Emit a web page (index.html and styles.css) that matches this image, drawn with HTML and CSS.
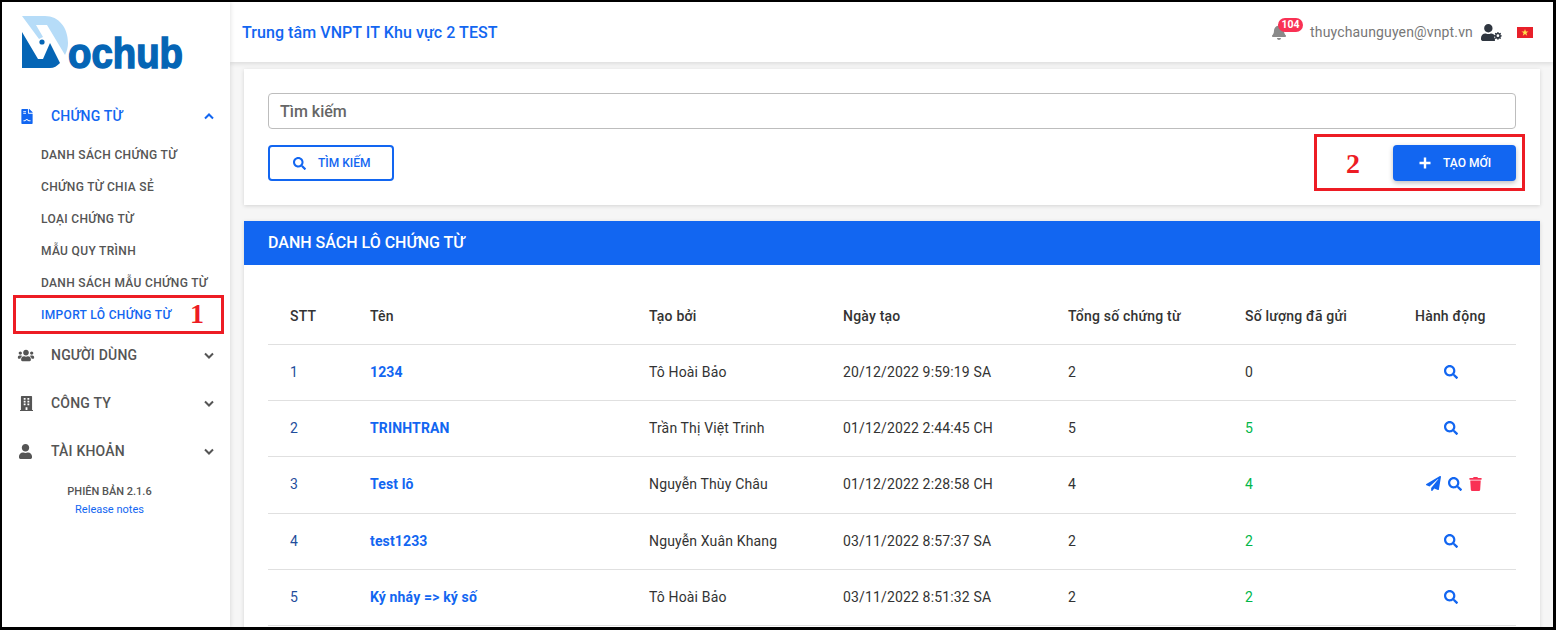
FILE: index.html

```html
<!DOCTYPE html>
<html lang="vi">
<head>
  <meta charset="UTF-8">
  <title>Dochub</title>
  <link rel="stylesheet" href="styles.css">
</head>
<body>
  <div class="frame">
    <aside class="sidebar">
      <div class="logo">
        <svg width="190" height="64" viewBox="0 0 190 64">
          <path d="M1 1H24C38 1 47 13 47 28C47 32 46 36 44 40L26 10H15L22 22L18 24Z" fill="#b6dcf8"/>
          <path d="M1 17L17 44H22L29 28L39 48C36 51 33 53 29 53H1Z" fill="#0565b5"/>
          <circle cx="21" cy="27" r="2.600" fill="#0565b5"/>
          <text x="47" y="53" class="logo-text" textLength="115" lengthAdjust="spacingAndGlyphs">ochub</text>
        </svg>
      </div>

      <div class="menu-head active">
        <svg class="menu-icon icon-doc" width="12" height="15" viewBox="0 0 384 512"><path fill="currentColor" d="M224 136V0H24C10.700 0 0 10.700 0 24v464c0 13.300 10.700 24 24 24h336c13.300 0 24-10.700 24-24V160H248c-13.200 0-24-10.800-24-24zM64 72c0-4.400 3.600-8 8-8h80c4.400 0 8 3.600 8 8v16c0 4.400-3.600 8-8 8H72c-4.400 0-8-3.600-8-8V72zm0 64c0-4.400 3.600-8 8-8h80c4.400 0 8 3.600 8 8v16c0 4.400-3.600 8-8 8H72c-4.400 0-8-3.600-8-8v-16zm192 280c-30 0-46-12-58-28-8-10-20-12-30 0-14 18-30 28-56 28H72v-32h40c18 0 26-10 36-22 22-26 56-24 76 0 10 14 18 22 32 22h56v32zM384 121.900v6.100H256V0h6.100c6.400 0 12.500 2.500 17 7l97.900 98c4.500 4.500 7 10.600 7 16.900z"/></svg>
        <span class="menu-label">CHỨNG TỪ</span>
        <svg class="chev" width="10" height="7" viewBox="0 0 10 7"><path d="M1 5.500L5 1.500L9 5.500" fill="none" stroke="currentColor" stroke-width="2"/></svg>
      </div>
      <ul class="submenu">
        <li>DANH SÁCH CHỨNG TỪ</li>
        <li>CHỨNG TỪ CHIA SẺ</li>
        <li>LOẠI CHỨNG TỪ</li>
        <li>MẪU QUY TRÌNH</li>
        <li>DANH SÁCH MẪU CHỨNG TỪ</li>
        <li class="current">IMPORT LÔ CHỨNG TỪ</li>
      </ul>

      <div class="menu-head">
        <svg class="menu-icon" width="18" height="13" viewBox="0 0 640 512"><path fill="currentColor" d="M96 224c35.300 0 64-28.700 64-64s-28.700-64-64-64-64 28.700-64 64 28.700 64 64 64zm448 0c35.300 0 64-28.700 64-64s-28.700-64-64-64-64 28.700-64 64 28.700 64 64 64zm32 32h-64c-17.600 0-33.500 7.100-45.100 18.600 40.300 22.100 68.900 62 75.100 109.400h66c17.700 0 32-14.300 32-32v-32c0-35.300-28.700-64-64-64zm-256 0c61.900 0 112-50.100 112-112S381.900 32 320 32 208 82.100 208 144s50.100 112 112 112zm76.800 32h-8.300c-20.800 10-43.900 16-68.500 16s-47.600-6-68.500-16h-8.300C179.600 288 128 339.600 128 403.200V432c0 26.500 21.500 48 48 48h288c26.500 0 48-21.500 48-48v-28.800c0-63.600-51.600-115.200-115.200-115.200zm-223.700-13.400C161.500 263.100 145.600 256 128 256H64c-35.300 0-64 28.700-64 64v32c0 17.700 14.300 32 32 32h65.900c6.300-47.400 34.900-87.300 75.200-109.400z"/></svg>
        <span class="menu-label">NGƯỜI DÙNG</span>
        <svg class="chev" width="10" height="7" viewBox="0 0 10 7"><path d="M1 1.500L5 5.500L9 1.500" fill="none" stroke="currentColor" stroke-width="2"/></svg>
      </div>
      <div class="menu-head">
        <svg class="menu-icon icon-building" width="13" height="15" viewBox="0 0 448 512"><path fill="currentColor" d="M436 480h-20V24c0-13.300-10.700-24-24-24H56C42.700 0 32 10.700 32 24v456H12c-6.600 0-12 5.400-12 12v20h448v-20c0-6.600-5.400-12-12-12zM128 76c0-6.600 5.400-12 12-12h40c6.600 0 12 5.400 12 12v40c0 6.600-5.400 12-12 12h-40c-6.600 0-12-5.400-12-12V76zm0 96c0-6.600 5.400-12 12-12h40c6.600 0 12 5.400 12 12v40c0 6.600-5.400 12-12 12h-40c-6.600 0-12-5.400-12-12v-40zm52 148h-40c-6.600 0-12-5.400-12-12v-40c0-6.600 5.400-12 12-12h40c6.600 0 12 5.400 12 12v40c0 6.600-5.400 12-12 12zm76 160h-64v-84c0-6.600 5.400-12 12-12h40c6.600 0 12 5.400 12 12v84zm64-172c0 6.600-5.400 12-12 12h-40c-6.600 0-12-5.400-12-12v-40c0-6.600 5.400-12 12-12h40c6.600 0 12 5.400 12 12v40zm0-96c0 6.600-5.400 12-12 12h-40c-6.600 0-12-5.400-12-12v-40c0-6.600 5.400-12 12-12h40c6.600 0 12 5.400 12 12v40zm0-96c0 6.600-5.400 12-12 12h-40c-6.600 0-12-5.400-12-12V76c0-6.600 5.400-12 12-12h40c6.600 0 12 5.400 12 12v40z"/></svg>
        <span class="menu-label">CÔNG TY</span>
        <svg class="chev" width="10" height="7" viewBox="0 0 10 7"><path d="M1 1.500L5 5.500L9 1.500" fill="none" stroke="currentColor" stroke-width="2"/></svg>
      </div>
      <div class="menu-head">
        <svg class="menu-icon icon-person" width="13" height="15" viewBox="0 0 448 512"><path fill="currentColor" d="M224 256c70.700 0 128-57.300 128-128S294.700 0 224 0 96 57.300 96 128s57.300 128 128 128zm89.600 32h-16.700c-22.200 10.200-46.900 16-72.900 16s-50.600-5.800-72.900-16h-16.700C60.200 288 0 348.200 0 422.400V464c0 26.500 21.500 48 48 48h352c26.500 0 48-21.500 48-48v-41.600c0-74.200-60.200-134.400-134.400-134.400z"/></svg>
        <span class="menu-label">TÀI KHOẢN</span>
        <svg class="chev" width="10" height="7" viewBox="0 0 10 7"><path d="M1 1.500L5 5.500L9 1.500" fill="none" stroke="currentColor" stroke-width="2"/></svg>
      </div>

      <div class="version">
        <div class="version-no">PHIÊN BẢN 2.1.6</div>
        <div class="release">Release notes</div>
      </div>

      <div class="mark mark-one"><span class="mark-no">1</span></div>
    </aside>

    <div class="main">
      <header class="topbar">
        <div class="org">Trung tâm VNPT IT Khu vực 2 TEST</div>
        <div class="user">
          <span class="bell">
            <svg width="14" height="16" viewBox="0 0 448 512"><path fill="#8a8a8a" d="M224 512c35.320 0 63.970-28.650 63.970-64H160.030c0 35.350 28.650 64 63.970 64zm215.390-149.710c-19.320-20.760-55.470-51.990-55.470-154.290 0-77.700-54.480-139.900-127.940-155.160V32c0-17.670-14.320-32-31.980-32s-31.980 14.330-31.980 32v20.840C118.560 68.100 64.080 130.300 64.080 208c0 102.300-36.150 133.530-55.470 154.290-6 6.450-8.660 14.160-8.610 21.710.11 16.400 12.980 32 32.100 32h383.800c19.120 0 32-15.600 32.100-32 .05-7.550-2.610-15.270-8.610-21.710z"/></svg>
            <span class="badge">104</span>
          </span>
          <span class="email">thuychaunguyen@vnpt.vn</span>
          <svg class="user-cog" width="21" height="17" viewBox="0 0 640 512"><path fill="#2f3640" d="M224 256c70.700 0 128-57.300 128-128S294.700 0 224 0 96 57.300 96 128s57.300 128 128 128zm89.600 32h-16.700c-22.200 10.200-46.900 16-72.900 16s-50.600-5.800-72.900-16h-16.700C60.200 288 0 348.200 0 422.400V464c0 26.500 21.500 48 48 48h352c10 0 19-3 27-8-4-14-8-40 1-60-24-14-32-46-18-70 4-8 10-16 18-24-30-28-68-62-114-62z"/><path fill="#2f3640" d="M530 240l-28 0-10 34-20 8-30-16-20 20 16 30-8 20-34 10v28l34 10 8 20-16 30 20 20 30-16 20 8 10 34h28l10-34 20-8 30 16 20-20-16-30 8-20 34-10v-28l-34-10-8-20 16-30-20-20-30 16-20-8zM516 312a42 42 0 1 1 0 84 42 42 0 1 1 0-84z"/></svg>
          <svg class="flag" width="16" height="11" viewBox="0 0 16 11"><rect width="16" height="11" fill="#e8202a"/><path fill="#ffe14d" d="M8 2l.9 2.500h2.600l-2.100 1.600.8 2.600L8 7.100 5.800 8.700l.8-2.600-2.100-1.600h2.600z"/></svg>
        </div>
      </header>

      <div class="content">
        <section class="card search-card">
          <div class="search-input">Tìm kiếm</div>
          <div class="search-actions">
            <button class="btn btn-outline">
              <svg width="13" height="13" viewBox="0 0 512 512"><path fill="currentColor" d="M505 442.700L405.300 343c-4.500-4.500-10.600-7-17-7H372c27.600-35.300 44-79.700 44-128C416 93.100 322.900 0 208 0S0 93.100 0 208s93.100 208 208 208c48.300 0 92.700-16.400 128-44v16.300c0 6.400 2.500 12.500 7 17l99.700 99.700c9.400 9.400 24.600 9.400 33.900 0l28.300-28.300c9.400-9.400 9.400-24.600.1-34zM208 336c-70.700 0-128-57.200-128-128 0-70.700 57.200-128 128-128 70.700 0 128 57.200 128 128 0 70.700-57.200 128-128 128z"/></svg>
              TÌM KIẾM
            </button>
            <button class="btn btn-solid">
              <svg width="12" height="12" viewBox="0 0 12 12"><path d="M6 .5v11M.5 6h11" stroke="currentColor" stroke-width="2.400" fill="none"/></svg>
              TẠO MỚI
            </button>
          </div>
          <div class="mark mark-two"><span class="mark-no">2</span></div>
        </section>

        <section class="card list-card">
          <h2 class="list-title">DANH SÁCH LÔ CHỨNG TỪ</h2>
          <div class="table-wrap">
            <table>
              <colgroup>
                <col class="c-stt"><col class="c-name"><col class="c-by"><col class="c-date"><col class="c-total"><col class="c-sent"><col class="c-act">
              </colgroup>
              <thead>
                <tr><th>STT</th><th>Tên</th><th>Tạo bởi</th><th>Ngày tạo</th><th>Tổng số chứng từ</th><th>Số lượng đã gửi</th><th>Hành động</th></tr>
              </thead>
              <tbody>
                <tr>
                  <td class="num">1</td><td class="name">1234</td><td>Tô Hoài Bảo</td><td>20/12/2022 9:59:19 SA</td><td>2</td><td>0</td>
                  <td class="act"><svg class="ic-blue" width="14" height="14" viewBox="0 0 512 512"><use href="#ic-search"/></svg></td>
                </tr>
                <tr>
                  <td class="num">2</td><td class="name">TRINHTRAN</td><td>Trần Thị Việt Trinh</td><td>01/12/2022 2:44:45 CH</td><td>5</td><td class="sent">5</td>
                  <td class="act"><svg class="ic-blue" width="14" height="14" viewBox="0 0 512 512"><use href="#ic-search"/></svg></td>
                </tr>
                <tr class="tall">
                  <td class="num">3</td><td class="name">Test lô</td><td>Nguyễn Thùy Châu</td><td>01/12/2022 2:28:58 CH</td><td>4</td><td class="sent">4</td>
                  <td class="act act-multi">
                    <svg class="ic-blue" width="15" height="15" viewBox="0 0 512 512"><path fill="currentColor" d="M476 3.200L12.500 270.600c-18.100 10.400-15.800 35.600 2.200 43.200L121 358.400l287.300-253.200c5.500-4.900 13.300 2.600 8.600 8.300L176 407v80.500c0 23.600 28.500 32.900 42.500 15.800L282 426l124.600 52.200c14.200 6 30.400-2.900 33-18.200l72-432C515 7.800 493.300-6.800 476 3.200z"/></svg>
                    <svg class="ic-blue" width="14" height="14" viewBox="0 0 512 512"><use href="#ic-search"/></svg>
                    <svg class="ic-red" width="13" height="14" viewBox="0 0 448 512"><path fill="currentColor" d="M432 32H312l-9.400-18.700A24 24 0 0 0 281.100 0H166.800a23.700 23.700 0 0 0-21.400 13.300L136 32H16A16 16 0 0 0 0 48v32a16 16 0 0 0 16 16h416a16 16 0 0 0 16-16V48a16 16 0 0 0-16-16zM53.200 467a48 48 0 0 0 47.900 45h245.800a48 48 0 0 0 47.900-45L416 128H32z"/></svg>
                  </td>
                </tr>
                <tr>
                  <td class="num">4</td><td class="name">test1233</td><td>Nguyễn Xuân Khang</td><td>03/11/2022 8:57:37 SA</td><td>2</td><td class="sent">2</td>
                  <td class="act"><svg class="ic-blue" width="14" height="14" viewBox="0 0 512 512"><use href="#ic-search"/></svg></td>
                </tr>
                <tr>
                  <td class="num">5</td><td class="name">Ký nháy =&gt; ký số</td><td>Tô Hoài Bảo</td><td>03/11/2022 8:51:32 SA</td><td>2</td><td class="sent">2</td>
                  <td class="act"><svg class="ic-blue" width="14" height="14" viewBox="0 0 512 512"><use href="#ic-search"/></svg></td>
                </tr>
              </tbody>
            </table>
          </div>
        </section>
      </div>
    </div>
  </div>

  <svg class="defs" width="0" height="0">
    <defs>
      <path id="ic-search" fill="currentColor" d="M505 442.700L405.300 343c-4.500-4.500-10.600-7-17-7H372c27.600-35.300 44-79.700 44-128C416 93.100 322.900 0 208 0S0 93.100 0 208s93.100 208 208 208c48.300 0 92.700-16.400 128-44v16.300c0 6.400 2.500 12.500 7 17l99.700 99.700c9.400 9.400 24.600 9.400 33.900 0l28.300-28.300c9.400-9.400 9.400-24.600.1-34zM208 336c-70.700 0-128-57.200-128-128 0-70.700 57.200-128 128-128 70.700 0 128 57.200 128 128 0 70.700-57.200 128-128 128z"/>
    </defs>
  </svg>
</body>
</html>
```

FILE: styles.css

```css
* {
  box-sizing: border-box;
}

html,
body {
  margin: 0;
  height: 630px;
  overflow: hidden;
}

body {
  font-family: Roboto, sans-serif;
  color: #333;
  background: #000;
}

.defs {
  position: absolute;
}

.frame {
  display: flex;
  height: 630px;
  border: 2px solid #000;
  border-bottom-width: 3px;
  border-right-width: 3px;
  background: #f6f6f6;
  overflow: hidden;
}

/* sidebar */
.sidebar {
  position: relative;
  width: 228px;
  flex: none;
  background: #fff;
  box-shadow: 1px 0 4px rgba(0, 0, 0, 0.1);
  z-index: 2;
}

.logo {
  height: 90px;
  padding: 13px 0 0 19px;
}

.logo svg {
  display: block;
}

.logo-text {
  font-family: "Liberation Sans", sans-serif;
  font-weight: 700;
  font-size: 43px;
  fill: #0565b5;
  stroke: #0565b5;
  stroke-width: 1.5px;
}

.menu-head {
  display: flex;
  align-items: center;
  height: 48px;
  padding-left: 15px;
  padding-right: 16px;
  font-size: 14px;
  font-weight: 500;
  color: #555;
  letter-spacing: 0.2px;
}

.menu-head.active {
  color: #1266f1;
}

.menu-icon {
  flex: none;
}

.icon-doc {
  margin-left: 4px;
}

.icon-building {
  margin-left: 3px;
}

.icon-person {
  margin-left: 2px;
}

.menu-label {
  position: absolute;
  left: 49px;
}

.chev {
  margin-left: auto;
  color: #555;
}

.active .chev {
  color: #1266f1;
}

.submenu {
  list-style: none;
  margin: -1px 0 0;
  padding: 0 0 0 39px;
  font-size: 12px;
  font-weight: 500;
  color: #555;
}

.submenu li {
  height: 32px;
  line-height: 32px;
  letter-spacing: 0.33px;
}

.submenu .current {
  color: #1266f1;
}

.version {
  margin-top: 8px;
  text-align: center;
  font-size: 11px;
  padding-right: 13px;
}

.version-no {
  font-weight: 500;
  color: #555;
  line-height: 18px;
}

.release {
  color: #1266f1;
  line-height: 18px;
}

/* red notes drawn on the screenshot */
.mark {
  position: absolute;
  border: 3px solid #ed1c24;
}

.mark-no {
  position: absolute;
  font-family: "Liberation Serif", serif;
  font-weight: 700;
  font-size: 28px;
  line-height: 28px;
  color: #ed1c24;
}

.mark-one {
  left: 11px;
  top: 293px;
  width: 211px;
  height: 39px;
}

.mark-one .mark-no {
  left: 174px;
  top: 2px;
}

.mark-two {
  left: 1070px;
  top: 65px;
  width: 211px;
  height: 57px;
}

.mark-two .mark-no {
  left: 29px;
  top: 13px;
}

/* top bar */
.main {
  flex: 1;
  min-width: 0;
  display: flex;
  flex-direction: column;
}

.topbar {
  flex: none;
  display: flex;
  align-items: center;
  justify-content: space-between;
  height: 60px;
  padding: 0 20px 0 12px;
  background: #fff;
  box-shadow: 0 2px 4px rgba(0, 0, 0, 0.1);
  z-index: 1;
}

.org {
  font-size: 16px;
  font-weight: 500;
  color: #1266f1;
  letter-spacing: 0.07px;
}

.user {
  display: flex;
  align-items: center;
}

.bell {
  position: relative;
  display: flex;
  margin-right: 24px;
}

.badge {
  position: absolute;
  left: 6px;
  top: -6px;
  width: 25px;
  height: 14px;
  border-radius: 7px;
  background: #f93154;
  color: #fff;
  font-size: 10.500px;
  font-weight: 700;
  line-height: 14px;
  text-align: center;
}

.email {
  font-size: 14px;
  color: #777;
  letter-spacing: 0.15px;
}

.user-cog {
  margin-left: 8px;
}

.flag {
  margin-left: 15px;
}

/* content */
.content {
  flex: 1;
  padding: 7px 13px 0 14px;
}

.card {
  position: relative;
  background: #fff;
  box-shadow: 0 1px 4px rgba(0, 0, 0, 0.14);
}

.search-card {
  height: 136px;
  padding: 24px 24px 0;
}

.search-input {
  height: 36px;
  padding-left: 11px;
  border: 1px solid #bdbdbd;
  border-radius: 4px;
  font-size: 16px;
  font-weight: 500;
  line-height: 35px;
  color: #666;
}

.search-actions {
  display: flex;
  justify-content: space-between;
  margin-top: 16px;
}

.btn {
  display: flex;
  align-items: center;
  height: 36px;
  border-radius: 4px;
  font-family: Roboto, sans-serif;
  font-size: 12px;
  font-weight: 500;
  padding: 0;
}

.btn-outline {
  width: 126px;
  padding-left: 23px;
  gap: 12px;
  background: #fff;
  border: 2px solid #1266f1;
  color: #1266f1;
}

.btn-solid {
  width: 123px;
  padding-left: 26px;
  gap: 12px;
  background: #1266f1;
  border: 0;
  color: #fff;
  box-shadow: 0 2px 5px rgba(0, 0, 0, 0.25);
}

.list-card {
  margin-top: 16px;
  padding-bottom: 40px;
}

.list-title {
  margin: 0;
  height: 44px;
  padding-left: 24px;
  background: #1266f1;
  color: #fff;
  font-size: 16px;
  font-weight: 500;
  line-height: 44px;
}

.table-wrap {
  padding: 23px 24px 0;
}

table {
  width: 100%;
  border-collapse: collapse;
  table-layout: fixed;
  font-size: 14px;
}

.c-stt { width: 80px; }
.c-name { width: 279px; }
.c-by { width: 194px; }
.c-date { width: 225px; }
.c-total { width: 177px; }
.c-sent { width: 170px; }

th,
td {
  padding: 0 0 0 22px;
  border-bottom: 1px solid #e0e0e0;
  text-align: left;
  color: #333;
}

th {
  height: 56px;
  font-weight: 500;
  letter-spacing: 0.2px;
}

td {
  height: 56px;
  letter-spacing: 0.15px;
}

.tall td {
  height: 57px;
  padding-bottom: 2px;
}

.num {
  color: #1f4e9c;
}

td.name {
  color: #1266f1;
  font-weight: 700;
}

td.sent {
  color: #00b74a;
}

td.act {
  padding: 0 8px 0 0;
  text-align: center;
  font-size: 0;
}

.tall td.act-multi {
  padding: 0 1px 2px 0;
}

.act svg {
  margin: 0 2px;
}

.act-multi svg {
  margin: 0 3.500px;
}

.ic-blue {
  color: #1266f1;
}

.ic-red {
  color: #f93154;
}
```
